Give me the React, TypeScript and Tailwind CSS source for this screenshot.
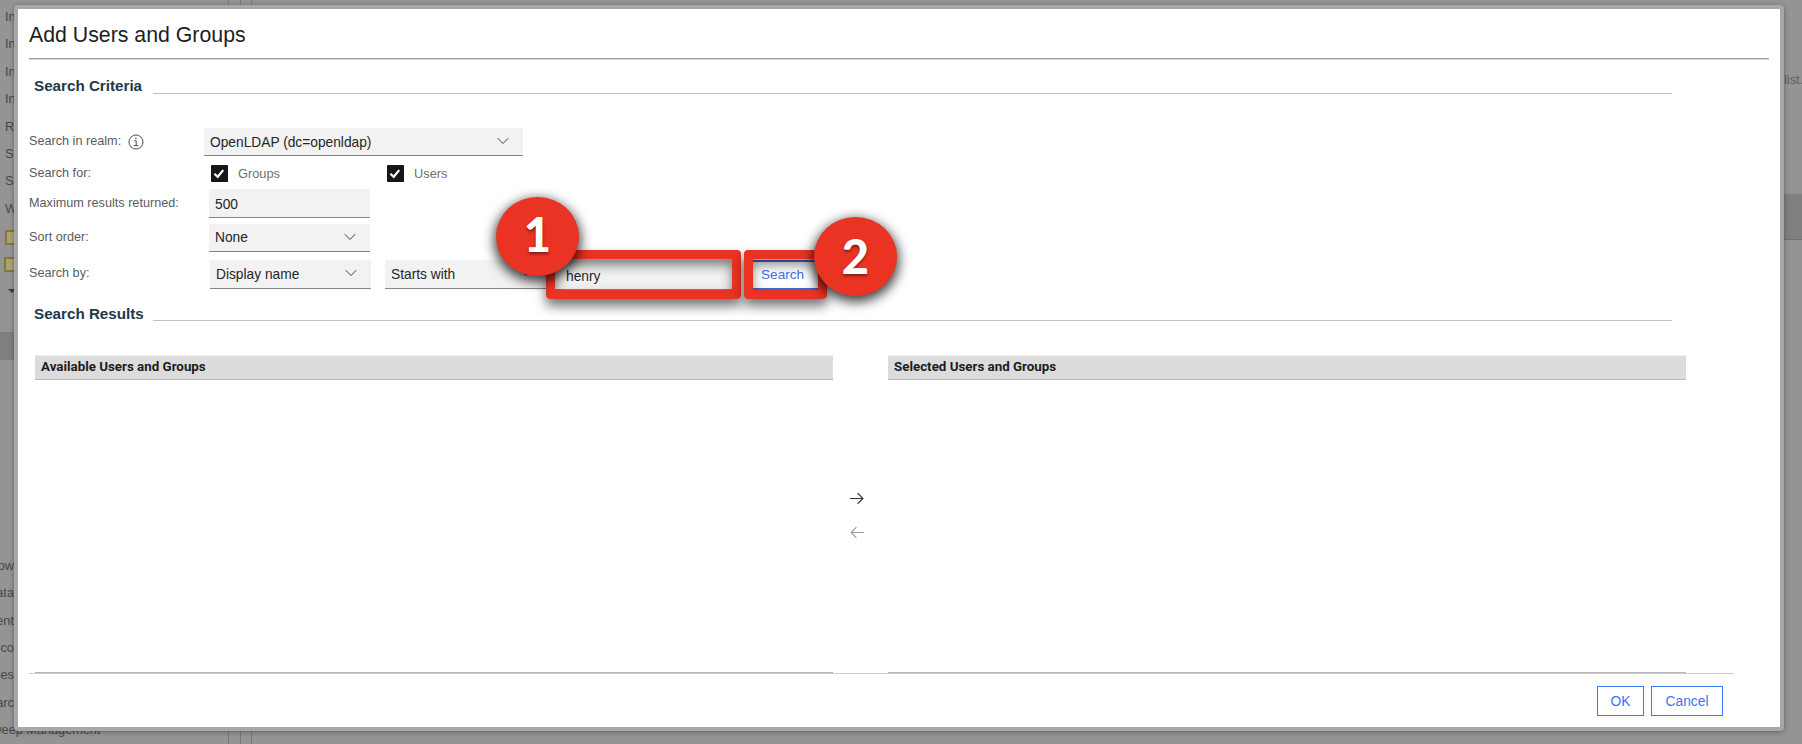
import type { ReactNode } from "react";

const treeTop = ["In", "In", "In", "In", "R", "S", "S", "W"];
const treeBottom = ["now", "ata", "ent", "eco", "oles", "earc"];

function Chevron() {
  return (
    <svg className="shrink-0" width="12" height="8" viewBox="0 0 12 8" fill="none" stroke="#444" strokeWidth="1">
      <path d="M0.8 1.2 L6 6.5 L11.2 1.2" />
    </svg>
  );
}

function Select({ text, className }: { text: string; className: string }) {
  return (
    <div className={`flex shrink-0 justify-between border-b border-[#868686] bg-[#f2f2f2] text-[13.75px] text-[#262626] ${className}`}>
      <span className="whitespace-nowrap">{text}</span>
      <Chevron />
    </div>
  );
}

function Check({ label, className }: { label: string; className: string }) {
  return (
    <div className={`flex items-start ${className}`}>
      <svg className="shrink-0" width="17" height="17" viewBox="0 0 17 17">
        <rect width="17" height="17" rx="0.8" fill="#161616" />
        <path d="M3.4 8.7 L6.7 11.8 L12.2 5.1" fill="none" stroke="#fff" strokeWidth="2.2" />
      </svg>
      <span className="ml-[10px] text-[12.8px] leading-[17px] text-[#6f6f6f]">{label}</span>
    </div>
  );
}

function Label({ children, className }: { children: ReactNode; className: string }) {
  return <div className={`shrink-0 text-[12.67px] whitespace-nowrap text-[#5c5c5c] ${className}`}>{children}</div>;
}

function Folder({ className }: { className: string }) {
  return <div className={`h-[15px] w-[14px] border-2 border-[#88763a] bg-[#aaa372] ${className}`} />;
}

function Section({ title, className, rule }: { title: string; className: string; rule: string }) {
  return (
    <div className={`flex items-start pr-[97px] pl-[5px] ${className}`}>
      <h2 className="w-[119px] shrink-0 text-[15.2px] font-bold whitespace-nowrap text-[#22384b]">{title}</h2>
      <div className={`h-px flex-1 bg-[#c2c2c2] ${rule}`} />
    </div>
  );
}

function UserList({ title }: { title: string }) {
  return (
    <div className="flex h-[318px] w-[798px] shrink-0 flex-col border-b border-[#b5b5b5]">
      <div className="h-[25px] border-t border-b border-t-[#eeeeee] border-b-[#b8b8b8] bg-[#dcdcdc] pl-[6px] font-['Roboto',sans-serif] text-[13.35px] leading-[22px] font-bold text-[#1c1c1c]">
        {title}
      </div>
    </div>
  );
}

function Backdrop() {
  return (
    <div className="flex h-[744px] w-[1802px] justify-between">
      <div className="flex w-[252px] justify-between">
        <div className="w-[229px] overflow-hidden border-r border-[#787878] text-[12.8px] text-[#484848]">
          <div className="h-[222px] pt-[2px]">
            {treeTop.map((t, i) => (
              <div key={i} className="h-[27.4px] pl-[5px] leading-[29px]">
                {t}
              </div>
            ))}
          </div>
          <Folder className="mt-[8px] ml-[5px]" />
          <Folder className="mt-[12px] ml-[4px]" />
          <div className="mt-[17px] ml-[8px] h-0 w-0 border-x-4 border-t-4 border-x-transparent border-t-[#3c3c3c]" />
          <div className="mt-[39px] h-[28px] bg-[#7f7f7f]" />
          <div className="mt-[192px]">
            {treeBottom.map((t) => (
              <div key={t} className="flex h-[27.35px] w-[14px] justify-end leading-[28px] whitespace-nowrap">
                {t}
              </div>
            ))}
            <div className="-ml-[16px] text-[12.7px] leading-[28px] whitespace-nowrap">Sweep Management</div>
          </div>
        </div>
        <div className="w-[12px] border-x border-[#787878]" />
      </div>
      <div className="w-[30px] pt-[66px] text-[12.8px] text-[#5a6066]">
        <div className="pl-[12px] leading-[28px]">list.</div>
        <div className="mt-[100px] h-[46px] border-b border-[#707070] bg-[#808080]" />
      </div>
    </div>
  );
}

function Dialog() {
  return (
    <div className="absolute top-[5px] left-[14px] flex h-[726px] w-[1770px] flex-col rounded-[4px] border-4 border-[#a8a8a8] bg-white px-[11px] shadow-[0_1px_5px_rgba(0,0,0,0.35)]">
      <h1 className="h-[49px] shrink-0 text-[21.3px] leading-[52px] text-[#1e1e1e]">Add Users and Groups</h1>
      <div className="h-[2px] shrink-0 border-t border-b border-t-[#a4a4a4] border-b-[#d6d6d6]" />
      <Section title="Search Criteria" className="h-[68px] leading-[52px]" rule="mt-[33px]" />

      <div className="flex h-[37px] shrink-0 items-start">
        <Label className="flex w-[175px] items-center leading-[27px]">
          Search in realm:
          <svg className="ml-[7px]" width="16" height="16" viewBox="0 0 16 16" fill="none" stroke="#4a4a4a" strokeWidth="1">
            <circle cx="8" cy="8" r="7" />
            <path d="M6.3 6.8 H8.2 V11.6 M5.8 11.6 H10.4" />
            <circle cx="7.9" cy="4.5" r="0.8" fill="#4a4a4a" stroke="none" />
          </svg>
        </Label>
        <Select text="OpenLDAP (dc=openldap)" className="h-[28px] w-[319px] pr-[14px] pl-[6px] leading-[30px] [&>svg]:mt-[9px]" />
      </div>
      <div className="flex h-[24px] shrink-0 items-start">
        <Label className="w-[182px] leading-[16px]">Search for:</Label>
        <Check label="Groups" className="w-[176px]" />
        <Check label="Users" className="" />
      </div>
      <div className="flex h-[35px] shrink-0 items-start">
        <Label className="w-[180px] leading-[28px]">Maximum results returned:</Label>
        <div className="h-[29px] w-[161px] border-b border-[#868686] bg-[#f2f2f2] pl-[6px] text-[13.8px] leading-[31px] text-[#262626]">500</div>
      </div>
      <div className="flex h-[36px] shrink-0 items-start">
        <Label className="w-[180px] leading-[26px]">Sort order:</Label>
        <Select text="None" className="h-[28px] w-[161px] pr-[14px] pl-[6px] leading-[27px] [&>svg]:mt-[9px]" />
      </div>
      <div className="flex h-[29px] shrink-0 items-start">
        <Label className="w-[181px] leading-[27px]">Search by:</Label>
        <Select text="Display name" className="h-[29px] w-[161px] pr-[14px] pl-[6px] leading-[29px] [&>svg]:mt-[9px]" />
        <Select text="Starts with" className="ml-[14px] h-[29px] w-[161px] pr-[14px] pl-[6px] leading-[29px] [&>svg]:mt-[9px]" />
        <div className="ml-[8px] h-[30px] w-[181px] border-b border-[#868686] bg-[#f2f2f2] pl-[12px] text-[13.8px] leading-[33px] text-[#262626]">henry</div>
        <div className="ml-[15px] h-[30px] w-[70px] border-2 border-[#3a6fe0] bg-white pl-[9px] text-[13.6px] leading-[26px] text-[#3d6fe8]">Search</div>
      </div>

      <Section title="Search Results" className="h-[66px] leading-[49px]" rule="mt-[31px]" />
      <div className="flex shrink-0 pl-[6px]">
        <UserList title="Available Users and Groups" />
        <div className="flex w-[55px] flex-col pt-[137px] pl-[16px]">
          <svg width="15" height="13" viewBox="0 0 15 13" fill="none" stroke="#333" strokeWidth="1.2">
            <path d="M1 6.5 H13.5 M8.6 1.2 L13.9 6.5 L8.6 11.8" />
          </svg>
          <svg className="mt-[21px] ml-[1px]" width="15" height="13" viewBox="0 0 15 13" fill="none" stroke="#999" strokeWidth="1.1">
            <path d="M14 6.5 H1.5 M6.4 1.2 L1.1 6.5 L6.4 11.8" />
          </svg>
        </div>
        <UserList title="Selected Users and Groups" />
      </div>
      <div className="h-px w-[1705px] shrink-0 bg-[#cccccc]" />
      <div className="flex shrink-0 justify-end gap-[7px] pt-[12px] pr-[46px] text-[13.8px] leading-[27px] text-[#3d74f0]">
        <button className="h-[30px] w-[47px] border border-[#3d78f5]">OK</button>
        <button className="h-[30px] w-[72px] border border-[#3d78f5]">Cancel</button>
      </div>
    </div>
  );
}

function Marker({ n, className }: { n: number; className: string }) {
  return (
    <div
      className={`absolute flex h-[79px] w-[83px] items-center justify-center rounded-[50%] bg-[#ea3323] font-['Lato',sans-serif] text-[47px] font-black text-white shadow-[0_4px_12px_2px_rgba(0,0,0,0.75)] [text-shadow:0_2px_3px_rgba(0,0,0,0.45)] ${className}`}
    >
      {n}
    </div>
  );
}

export default function App() {
  return (
    <div className="relative h-[744px] w-[1802px] overflow-hidden bg-[#949494] font-['Liberation_Sans',Arial,sans-serif]">
      <Backdrop />
      <Dialog />
      <div className="absolute top-[250px] left-[546px] h-[49px] w-[195px] rounded-[4px] border-[9px] border-[#ea3323] shadow-[0_7px_12px_rgba(0,0,0,0.55),inset_0_6px_12px_rgba(0,0,0,0.5)]" />
      <div className="absolute top-[250px] left-[744px] h-[49px] w-[83px] rounded-[4px] border-[9px] border-[#ea3323] shadow-[0_7px_12px_rgba(0,0,0,0.55),inset_0_6px_12px_rgba(0,0,0,0.45)]" />
      <Marker n={1} className="top-[197px] left-[496px] pb-[5px]" />
      <Marker n={2} className="top-[217px] left-[814px]" />
    </div>
  );
}
